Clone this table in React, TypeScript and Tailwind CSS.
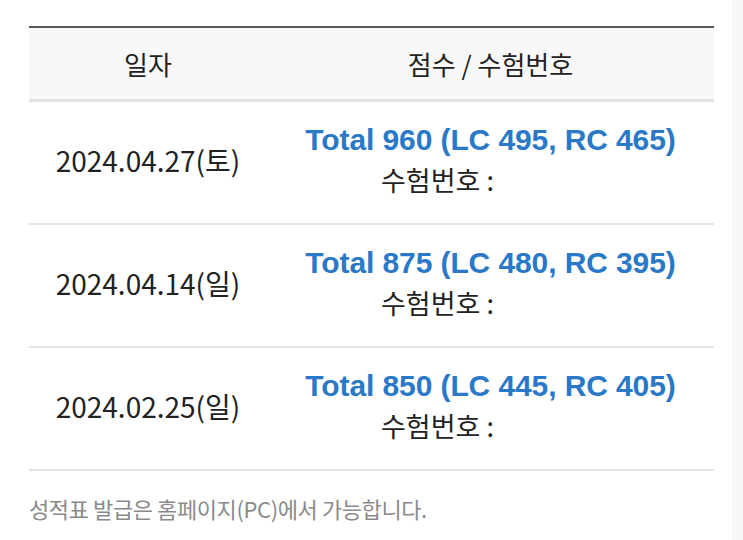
import React from "react";

const rows = [
  { date: "2024.04.27(토)", score: "Total 960 (LC 495, RC 465)" },
  { date: "2024.04.14(일)", score: "Total 875 (LC 480, RC 395)" },
  { date: "2024.02.25(일)", score: "Total 850 (LC 445, RC 405)" },
];

export default function App() {
  return (
    <div
      className="w-[743px] h-[540px] bg-white flex overflow-hidden"
      style={{ fontFamily: '"Noto Sans CJK KR", "Noto Sans", sans-serif' }}
    >
      <div className="w-[732px] pt-[26px] pl-[29px] pr-[18px]">
        <div className="border-t-2 border-[#5a5a5a]">
          <div className="flex h-[74px] bg-[#f8f8f8] border-b-[3px] border-[#e4e4e4] text-[26px] text-[#222] items-center">
            <div className="w-[238px] text-center">일자</div>
            <div className="flex-1 text-center">점수 / 수험번호</div>
          </div>
          {rows.map((r, i) => (
            <div key={i} className="flex h-[123px] items-center pb-[6px] border-b-2 border-[#e4e4e4]">
              <div className="w-[238px] text-center text-[28px] text-[#222]">{r.date}</div>
              <div className="flex-1 flex flex-col items-center">
                <div
                  className="text-[30px] font-bold text-[#2a78c8] leading-[38px] tracking-[-0.1px]"
                  style={{ fontFamily: '"Liberation Sans", "Noto Sans CJK KR", sans-serif' }}
                >
                  {r.score}
                </div>
                <div className="text-[27px] text-[#222] leading-[38px] mt-[2px]">
                  수험번호 : <span className="inline-block w-[100px]"></span>
                </div>
              </div>
            </div>
          ))}
          <div className="pt-[21px] text-[22px] text-[#8a8a8a] tracking-[-0.4px]">
            성적표 발급은 홈페이지(PC)에서 가능합니다.
          </div>
        </div>
      </div>
      <div className="flex-1 bg-[#f7f7f7]"></div>
    </div>
  );
}
